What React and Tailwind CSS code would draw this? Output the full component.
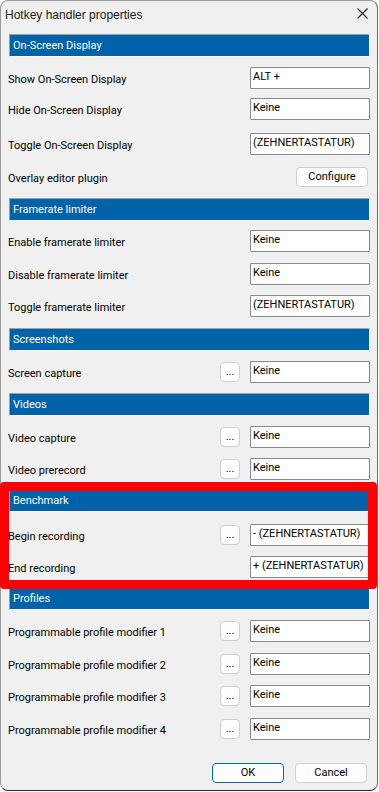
import React from "react";

const font = "font-['Roboto','Liberation_Sans',Arial,sans-serif]";
const txt = "text-[11px] leading-[16px]";

function Header({ title, mt, h = "h-[23px]" }) {
  return (
    <div
      className={`${mt} ${h} bg-[#0062a8] border-t border-l border-t-[#a0a0a0] border-l-[#a0a0a0] border-b border-r border-b-white border-r-white flex items-center pl-[3px] text-white ${txt}`}
    >
      {title}
    </div>
  );
}

function Dots() {
  return (
    <div className={`w-[20px] h-[20px] rounded-[4px] border border-[#d0d0d0] bg-[#fdfdfd] flex items-center justify-center ${txt} text-black`}>
      ...
    </div>
  );
}

function Row({ label, value, mt, dots, configure }) {
  return (
    <div className={`${mt} h-[22px] flex items-center`}>
      <div className={`flex-1 -ml-[1px] mt-[3px] ${txt} text-black whitespace-nowrap`}>
        {label}
      </div>
      {dots && (
        <div className="mr-[10px]">
          <Dots />
        </div>
      )}
      {configure ? (
        <div className={`mr-[2px] w-[72px] h-[20px] rounded-[4px] border border-[#d0d0d0] bg-[#fdfdfd] flex items-center justify-center ${txt} text-black`}>
          Configure
        </div>
      ) : (
        <div className={`w-[120px] h-[22px] bg-white border border-[#8a8a8a] rounded-[1px] pl-[2px] pt-[1px] ${txt} text-black whitespace-nowrap overflow-hidden`}>
          {value}
        </div>
      )}
    </div>
  );
}

export default function App() {
  return (
    <div className={`w-[379px] h-[792px] bg-white relative ${font}`}>
      <div className="w-[378px] h-[791px] bg-[#f0f0f0] rounded-[8px] border border-[#9a9a9a] border-b-[#2a2a2a] border-r-[#6a6a6a] flex flex-col">
        <div className="h-[29px] flex items-center justify-between pl-[4px] pr-[9px]">
          <div className="font-['Liberation_Sans',Arial,sans-serif] text-[12px] leading-[16px] text-[#1a1a1a] mt-[-1px]">Hotkey handler properties</div>
          <svg width="11" height="11" viewBox="0 0 11 11" className="mt-[-4px]">
            <path d="M0.5 0.5 L10.5 10.5 M10.5 0.5 L0.5 10.5" stroke="#1a1a1a" strokeWidth="1.1" />
          </svg>
        </div>
        <div className="pl-[8px] pr-[7px] flex flex-col">
          <Header title="On-Screen Display" mt="mt-[4px]" />
          <Row label="Show On-Screen Display" value="ALT +" mt="mt-[10px]" />
          <Row label="Hide On-Screen Display" value="Keine" mt="mt-[9px]" />
          <Row label="Toggle On-Screen Display" value="(ZEHNERTASTATUR)" mt="mt-[13px]" />
          <Row label="Overlay editor plugin" configure mt="mt-[11px]" />
          <Header title="Framerate limiter" mt="mt-[10px]" />
          <Row label="Enable framerate limiter" value="Keine" mt="mt-[9px]" />
          <Row label="Disable framerate limiter" value="Keine" mt="mt-[11px]" />
          <Row label="Toggle framerate limiter" value="(ZEHNERTASTATUR)" mt="mt-[10px]" />
          <Header title="Screenshots" mt="mt-[11px]" />
          <Row label="Screen capture" value="Keine" dots mt="mt-[10px]" />
          <Header title="Videos" mt="mt-[10px]" />
          <Row label="Video capture" value="Keine" dots mt="mt-[10px]" />
          <Row label="Video prerecord" value="Keine" dots mt="mt-[10px]" />
          <Header title="Benchmark" mt="mt-[9px]" />
          <Row label="Begin recording" value="- (ZEHNERTASTATUR)" dots mt="mt-[12px]" />
          <Row label="End recording" value="+ (ZEHNERTASTATUR)" mt="mt-[10px]" />
          <Header title="Profiles" mt="mt-[10px]" h="h-[22px]" />
          <Row label="Programmable profile modifier 1" value="Keine" dots mt="mt-[10px]" />
          <Row label="Programmable profile modifier 2" value="Keine" dots mt="mt-[11px]" />
          <Row label="Programmable profile modifier 3" value="Keine" dots mt="mt-[10px]" />
          <Row label="Programmable profile modifier 4" value="Keine" dots mt="mt-[11px]" />
          <div className="mt-[23px] flex justify-end gap-[11px] pr-[3px]">
            <div className={`w-[72px] h-[20px] rounded-[4px] border border-[#0067c0] bg-[#fdfdfd] flex items-center justify-center ${txt} text-black`}>
              OK
            </div>
            <div className={`w-[72px] h-[20px] rounded-[4px] border border-[#d0d0d0] bg-[#fdfdfd] flex items-center justify-center ${txt} text-black`}>
              Cancel
            </div>
          </div>
        </div>
      </div>
      <div className="absolute left-0 top-[482px] w-[377px] h-[107px] border-[9px] border-[#ff0000] rounded-[4px] pointer-events-none" />
    </div>
  );
}
